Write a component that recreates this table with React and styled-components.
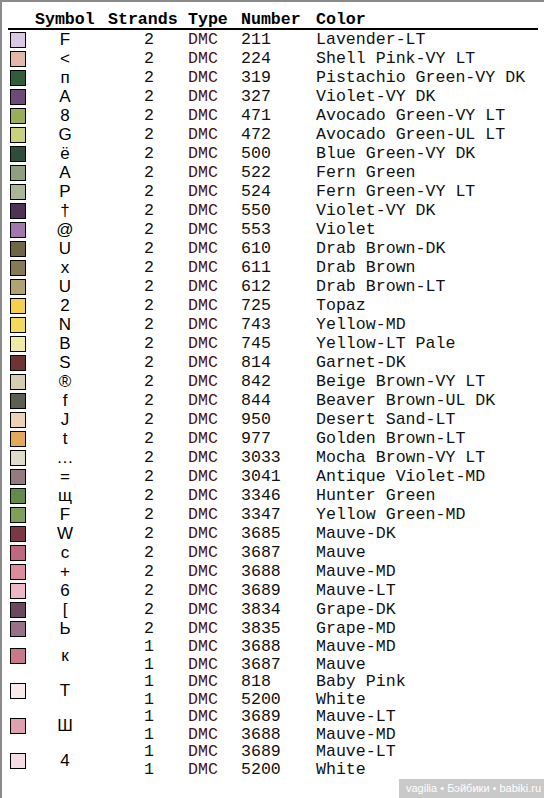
import React from "react";
import styled, { createGlobalStyle } from "styled-components";

const threads = [
  { swatch: "#d8c8e4", symbol: "F", lines: [[2, "211", "Lavender-LT"]] },
  { swatch: "#e4b8a8", symbol: "<", lines: [[2, "224", "Shell Pink-VY LT"]] },
  { swatch: "#2f5e3a", symbol: "п", lines: [[2, "319", "Pistachio Green-VY DK"]] },
  { swatch: "#6e4a78", symbol: "A", lines: [[2, "327", "Violet-VY DK"]] },
  { swatch: "#98ae58", symbol: "8", lines: [[2, "471", "Avocado Green-VY LT"]] },
  { swatch: "#c8d27e", symbol: "G", lines: [[2, "472", "Avocado Green-UL LT"]] },
  { swatch: "#2e4d3a", symbol: "ё", lines: [[2, "500", "Blue Green-VY DK"]] },
  { swatch: "#8fa07e", symbol: "A", lines: [[2, "522", "Fern Green"]] },
  { swatch: "#adb597", symbol: "P", lines: [[2, "524", "Fern Green-VY LT"]] },
  { swatch: "#4e3356", symbol: "†", lines: [[2, "550", "Violet-VY DK"]] },
  { swatch: "#a078ab", symbol: "@", lines: [[2, "553", "Violet"]] },
  { swatch: "#6e6646", symbol: "U", lines: [[2, "610", "Drab Brown-DK"]] },
  { swatch: "#857a55", symbol: "x", lines: [[2, "611", "Drab Brown"]] },
  { swatch: "#b0a273", symbol: "U", lines: [[2, "612", "Drab Brown-LT"]] },
  { swatch: "#f5d050", symbol: "2", lines: [[2, "725", "Topaz"]] },
  { swatch: "#f6d85a", symbol: "N", lines: [[2, "743", "Yellow-MD"]] },
  { swatch: "#f0eba4", symbol: "B", lines: [[2, "745", "Yellow-LT Pale"]] },
  { swatch: "#6e3434", symbol: "S", lines: [[2, "814", "Garnet-DK"]] },
  { swatch: "#d6ccb0", symbol: "®", lines: [[2, "842", "Beige Brown-VY LT"]] },
  { swatch: "#5e5f53", symbol: "f", lines: [[2, "844", "Beaver Brown-UL DK"]] },
  { swatch: "#eed2b8", symbol: "J", lines: [[2, "950", "Desert Sand-LT"]] },
  { swatch: "#e2a95a", symbol: "t", lines: [[2, "977", "Golden Brown-LT"]] },
  { swatch: "#e0dcc8", symbol: "…", lines: [[2, "3033", "Mocha Brown-VY LT"]] },
  { swatch: "#957a80", symbol: "=", lines: [[2, "3041", "Antique Violet-MD"]] },
  { swatch: "#628a48", symbol: "щ", lines: [[2, "3346", "Hunter Green"]] },
  { swatch: "#7ea05a", symbol: "F", lines: [[2, "3347", "Yellow Green-MD"]] },
  { swatch: "#7a3844", symbol: "W", lines: [[2, "3685", "Mauve-DK"]] },
  { swatch: "#c06880", symbol: "c", lines: [[2, "3687", "Mauve"]] },
  { swatch: "#dc8c9c", symbol: "+", lines: [[2, "3688", "Mauve-MD"]] },
  { swatch: "#ecb8c8", symbol: "6", lines: [[2, "3689", "Mauve-LT"]] },
  { swatch: "#6c485e", symbol: "[", lines: [[2, "3834", "Grape-DK"]] },
  { swatch: "#987088", symbol: "Ь", lines: [[2, "3835", "Grape-MD"]] },
  {
    swatch: "#c87888",
    symbol: "к",
    lines: [
      [1, "3688", "Mauve-MD"],
      [1, "3687", "Mauve"],
    ],
  },
  {
    swatch: "#f6eaea",
    symbol: "T",
    lines: [
      [1, "818", "Baby Pink"],
      [1, "5200", "White"],
    ],
  },
  {
    swatch: "#e0a0b0",
    symbol: "Ш",
    lines: [
      [1, "3689", "Mauve-LT"],
      [1, "3688", "Mauve-MD"],
    ],
  },
  {
    swatch: "#f4dce4",
    symbol: "4",
    lines: [
      [1, "3689", "Mauve-LT"],
      [1, "5200", "White"],
    ],
  },
];

const App = () => {
  return (
    <>
      <GlobalStyle />
      <Page>
        <Table>
          <HeaderRow>
            <span />
            <HeadCell>Symbol</HeadCell>
            <HeadCell>Strands</HeadCell>
            <HeadCell>Type</HeadCell>
            <HeadCell>Number</HeadCell>
            <HeadCell>Color</HeadCell>
          </HeaderRow>

          {threads.map((t, i) => {
            const multi = t.lines.length > 1;
            return (
              <Entry key={i} $rowH={multi ? 17.5 : 19}>
                <SwatchCell $span={t.lines.length}>
                  <Swatch $color={t.swatch} />
                </SwatchCell>
                <SymbolCell $span={t.lines.length}>{t.symbol}</SymbolCell>
                {t.lines.map(([strands, number, name], j) => (
                  <React.Fragment key={j}>
                    <StrandsCell>{strands}</StrandsCell>
                    <TypeCell>DMC</TypeCell>
                    <MonoCell>{number}</MonoCell>
                    <MonoCell>{name}</MonoCell>
                  </React.Fragment>
                ))}
              </Entry>
            );
          })}
        </Table>

        <Watermark>vagilia • Бэйбики • babiki.ru</Watermark>
      </Page>
    </>
  );
};

const GlobalStyle = createGlobalStyle`
  html, body {
    margin: 0;
    padding: 0;
    background: #ffffff;
  }
`;

const columns = "27px 73px 80px 53px 75px 1fr";

const Page = styled.div`
  position: relative;
  height: 798px;
  box-sizing: border-box;
  border-left: 2px solid #8a8a8a;
  border-top: 2px solid #8a8a8a;
  padding-left: 6px;
  background: #ffffff;
  overflow: hidden;
`;

const Table = styled.div`
  width: 530px;
  display: flex;
  flex-direction: column;
`;

const HeaderRow = styled.div`
  display: grid;
  grid-template-columns: ${columns};
  height: 26px;
  padding-top: 9px;
  box-sizing: border-box;
  border-bottom: 2px solid #000000;
  height: 28px;
`;

const HeadCell = styled.span`
  font-family: "Liberation Mono", "Courier New", monospace;
  font-weight: 700;
  font-size: 16.6px;
  line-height: 17px;
  color: #000000;
`;

const Entry = styled.div`
  display: grid;
  grid-template-columns: ${columns};
  grid-auto-rows: ${(p) => p.$rowH}px;
  align-items: center;
`;

const SwatchCell = styled.div`
  grid-column: 1;
  grid-row: span ${(p) => p.$span};
  display: flex;
  align-items: center;
  padding-left: 2px;
`;

const Swatch = styled.div`
  width: 16px;
  height: 16px;
  box-sizing: border-box;
  border: 1px solid #000000;
  background: ${(p) => p.$color};
`;

const SymbolCell = styled.div`
  grid-column: 2;
  grid-row: span ${(p) => p.$span};
  padding-right: 13px;
  text-align: center;
  font-family: "Liberation Sans", Arial, sans-serif;
  font-size: 17px;
  line-height: 19px;
  color: #000000;
`;

const MonoCell = styled.span`
  font-family: "Liberation Mono", "Courier New", monospace;
  font-size: 16.6px;
  line-height: 17px;
  color: #111111;
  white-space: nowrap;
`;

const StrandsCell = styled(MonoCell)`
  grid-column: 3;
  padding-left: 36px;
`;

const TypeCell = styled(MonoCell)`
  color: #4a1212;
`;

const Watermark = styled.div`
  position: absolute;
  right: 0;
  bottom: 0;
  width: 145px;
  height: 19px;
  background: #c9c9c9;
  color: #ffffff;
  font-family: "Liberation Sans", Arial, sans-serif;
  font-size: 11px;
  line-height: 19px;
  padding-left: 7px;
  box-sizing: border-box;
  white-space: nowrap;
`;

export default App;
